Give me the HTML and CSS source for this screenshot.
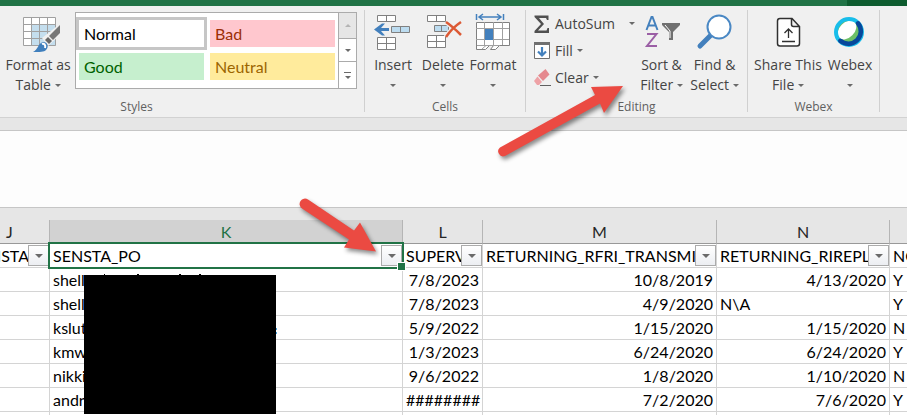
FILE: index.html
```html
<!DOCTYPE html>
<html lang="en">
<head>
<meta charset="utf-8">
<title>Spreadsheet</title>
<link rel="stylesheet" href="styles.css">
</head>
<body>
<header class="titlebar"><div class="account"></div></header>
<nav class="ribbon" aria-label="Ribbon">
  <section class="group styles">
    <div class="tools">
      <button class="tool format-as">
        <svg width="40" height="45" viewBox="0 0 40 45"><path d="M5.500 7.500h32v28h-32z" fill="#fff"/><path d="M14 14h24v22H14z" fill="#c4deee"/><path d="M5.500 7.500h32v28h-32zM5.500 14.500h32M5.500 21.500h32M5.500 28.500h32M13.500 7v28M21.500 7v28M29.500 7v28" fill="none" stroke="#a0a0a0"/><path d="M43 13L24 28l6 8 13-12z" fill="#f0f0f0"/><path d="M42 15v8l-7 7-4-4z" fill="#777"/><path d="M30 27l4 4-3 3-4-4z" fill="#666"/><path d="M15 42c5-2 5-9 10-10 5 0 6 5 3 8-2 2-6 2-13 2z" fill="#3f7fbd"/><path d="M24 34c2-1 4 1 3 4" stroke="#fff" stroke-width="2" fill="none"/></svg>
        <span>Format as</span><span>Table <i class="caret"></i></span>
      </button>
      <div class="gallery">
        <div class="swatches">
          <button class="swatch normal">Normal</button><button class="swatch bad">Bad</button>
          <button class="swatch good">Good</button><button class="swatch neutral">Neutral</button>
        </div>
        <div class="scroller">
          <button class="up" aria-label="Previous styles" disabled><i class="caret"></i></button>
          <button aria-label="Next styles"><i class="caret"></i></button>
          <button class="more" aria-label="More styles"><i class="caret"></i></button>
        </div>
      </div>
    </div>
    <h2>Styles</h2>
  </section>
  <span class="separator"></span>
  <section class="group cells">
    <div class="tools">
      <button class="tool">
        <svg width="40" height="45" viewBox="0 0 40 45"><g fill="#fff" stroke="#808080"><path d="M4.500 5.500h18v6h-18zM13.500 5v6"/><path d="M4.500 27.500h18v12h-18zM4.500 33.500h18M13.500 27v12"/><path d="M18.500 16.500h18v6h-18zM27.500 16v6" fill="#bcdcf0"/></g><path d="M1 19.500l8-6h3l-4 4.500h8v3H8l4 4.500H9z" fill="#4380bd"/></svg>
        <span>Insert</span><span><i class="caret"></i></span>
      </button>
      <button class="tool">
        <svg width="40" height="45" viewBox="0 0 40 45"><g fill="#fff" stroke="#808080"><path d="M4.500 5.500h18v6h-18zM13.500 5v6"/><path d="M4.500 25.500h18v12h-18zM4.500 31.500h18M13.500 25v12"/><path d="M11.500 15.500h14v6h-14zM18.500 15v6" fill="#bcdcf0"/></g><path d="M23 12c6 4 10 8 15 13M38 12c-6 4-11 9-15 15" stroke="#f0f0f0" stroke-width="5" fill="none"/><path d="M23 12c6 4 10 8 15 13M38 12c-6 4-11 9-15 15" stroke="#dc5934" stroke-width="2.500" fill="none"/></svg>
        <span>Delete</span><span><i class="caret"></i></span>
      </button>
      <button class="tool">
        <svg width="40" height="45" viewBox="0 0 40 45"><path d="M3.500 4v6M30.500 4v6M6 7h22M10 4L6 7l4 3M24 4l4 3-4 3" fill="none" stroke="#4380bd" stroke-width="1.500"/><path d="M3.500 12.500h33v23h-10l-4 4h-5l3-4h-4l-4 4h-9z" fill="#fff" stroke="#808080"/><path d="M3 18.500h33M3 29.500h33M11.500 12v23M20.500 12v23M29.500 12v23M4 35.500h22M9 39l4-3.500" fill="none" stroke="#a0a0a0"/><path d="M12 19h8v11h-8z" fill="#4380bd"/></svg>
        <span>Format</span><span><i class="caret"></i></span>
      </button>
    </div>
    <h2>Cells</h2>
  </section>
  <span class="separator"></span>
  <section class="group editing">
    <div class="tools">
      <div class="stack">
        <button class="line autosum"><svg width="18" height="20" viewBox="0 0 18 20"><path d="M1.500 1.500h14v4.500h-1.500l-1-2H6l5 6-6 6.500h8.500l1-2.500h1.500v5h-14.500v-2l6.500-7-6.500-7z" fill="#505050"/></svg><span>AutoSum</span><i class="caret"></i></button>
        <button class="line"><svg width="18" height="20" viewBox="0 0 18 20"><path d="M1.500 1.500h15v16h-15z" fill="#fff" stroke="#707070"/><path d="M1 1h16v3H1z" fill="#707070"/><path d="M9 6v8M5 10.500L9 14.500l4-4" fill="none" stroke="#4380bd" stroke-width="2.200"/></svg><span>Fill</span><i class="caret"></i></button>
        <button class="line"><svg width="18" height="20" viewBox="0 0 18 20"><path d="M5 7.500L12.500 1l4 5.500L10 13z" fill="#e5898f"/><path d="M4.500 8.500l4.500 5.500-3 3H4l-3-4z" fill="#eea2a6"/><path d="M7 17.500h11" stroke="#606060"/></svg><span>Clear</span><i class="caret"></i></button>
      </div>
      <button class="tool">
        <svg width="40" height="45" viewBox="0 0 40 45"><g fill="none" stroke-width="2"><path d="M4.500 20L9.500 7h1l5 13M6 15.500h8" stroke="#4380bd"/><path d="M5 24h9.500L5 36h10" stroke="#9b5fa5"/></g><path d="M20 13h18v2l-7 7v8h-4v-8l-7-7z" fill="#707070"/><path d="M23 15l5 6v7" fill="none" stroke="#fff"/></svg>
        <span>Sort &amp;</span><span>Filter <i class="caret"></i></span>
      </button>
      <button class="tool">
        <svg width="40" height="45" viewBox="0 0 40 45"><path d="M5 36l11-11" stroke="#4380bd" stroke-width="5" stroke-linecap="round"/><circle cx="24" cy="17" r="11.500" fill="#fff" stroke="#4a88c4" stroke-width="2"/></svg>
        <span>Find &amp;</span><span>Select <i class="caret"></i></span>
      </button>
    </div>
    <h2>Editing</h2>
  </section>
  <span class="separator"></span>
  <section class="group webex">
    <div class="tools">
      <button class="tool share">
        <svg width="40" height="45" viewBox="0 0 40 45"><path d="M12 8.500h12l7.500 8v17a2.500 2.500 0 0 1-2.500 2.500H12a2.500 2.500 0 0 1-2.500-2.500V11A2.500 2.500 0 0 1 12 8.500zM23.500 9v5.500a2 2 0 0 0 2 2H31" fill="#fff" stroke="#303030" stroke-width="1.500"/><path d="M20.500 28v-9M16.500 23l4-4 4 4M14 31.500h13" fill="none" stroke="#303030" stroke-width="1.300"/></svg>
        <span>Share This</span><span>File <i class="caret"></i></span>
      </button>
      <button class="tool">
        <svg width="40" height="45" viewBox="0 0 40 45"><circle cx="19" cy="22" r="12" fill="#6cc067"/><ellipse cx="17" cy="20" rx="11" ry="7.500" transform="rotate(-45 17 20)" fill="#fff"/><circle cx="19" cy="22" r="13" fill="none" stroke="#18bdea" stroke-width="4"/><path d="M28 13.300a12.500 12.500 0 0 1-17.700 17.500" fill="none" stroke="#07479b" stroke-width="4.500" stroke-linecap="round"/></svg>
        <span>Webex</span><span><i class="caret"></i></span>
      </button>
    </div>
    <h2>Webex</h2>
  </section>
  <span class="separator"></span>
</nav>
<div class="formula-area"></div>
<main class="sheet">
  <table>
    <colgroup><col class="j"><col class="k"><col class="l"><col class="m"><col class="n"><col></colgroup>
    <thead><tr><th>J</th><th class="active">K</th><th>L</th><th>M</th><th>N</th><th></th></tr></thead>
    <tbody>
      <tr class="names">
        <td class="tail"><div>NSTA</div><button class="filter" aria-label="Filter column J"><i class="caret"></i></button></td>
        <td class="selected"><div>SENSTA_PO</div><button class="filter" aria-label="Filter column K"><i class="caret"></i></button></td>
        <td><div>SUPERV</div><button class="filter" aria-label="Filter column L"><i class="caret"></i></button></td>
        <td><div>RETURNING_RFRI_TRANSMI</div><button class="filter" aria-label="Filter column M"><i class="caret"></i></button></td>
        <td><div>RETURNING_RIREPL</div><button class="filter" aria-label="Filter column N"><i class="caret"></i></button></td>
        <td>NO</td>
      </tr>
      <tr><td></td><td class="masked">shell<svg class="mask" width="194" height="141" viewBox="0 0 194 141"><path d="M0 2h192v139H0z"/><path d="M53 1h2v2h-2zM95 1h2v2h-2zM115 1h2v2h-2zM20 1h1v1h-1z"/><path d="M192 55h1v2h-1zM192 59h1v2h-1z" fill="#4ba3dc"/></svg></td><td class="num">7/8/2023</td><td class="num">10/8/2019</td><td class="num">4/13/2020</td><td>Y</td></tr>
      <tr><td></td><td>shell</td><td class="num">7/8/2023</td><td class="num">4/9/2020</td><td>N\A</td><td>Y</td></tr>
      <tr><td></td><td>kslut</td><td class="num">5/9/2022</td><td class="num">1/15/2020</td><td class="num">1/15/2020</td><td>N</td></tr>
      <tr><td></td><td>kmw</td><td class="num">1/3/2023</td><td class="num">6/24/2020</td><td class="num">6/24/2020</td><td>Y</td></tr>
      <tr><td></td><td>nikki</td><td class="num">9/6/2022</td><td class="num">1/8/2020</td><td class="num">1/10/2020</td><td>N</td></tr>
      <tr><td></td><td>andr</td><td class="num">########</td><td class="num">7/2/2020</td><td class="num">7/6/2020</td><td>Y</td></tr>
      <tr><td></td><td></td><td></td><td></td><td></td><td></td></tr>
    </tbody>
  </table>
</main>
<svg class="arrows" width="640" height="270" viewBox="0 0 640 270" aria-hidden="true">
  <path d="M500 147.500L595 95l-4-8 32-1-19 27-4-9.500L505 156a5 5 0 0 1-5-8.500z"/>
  <path d="M308 199.500l46 31 6-8 16 29-32-4 5-8-47-31a5 5 0 0 1 6-9z"/>
</svg>
</body>
</html>
```

FILE: styles.css
```css
* { box-sizing: border-box; }

body {
  margin: 0;
  display: flex;
  flex-direction: column;
  height: 100vh;
  overflow: hidden;
  position: relative;
  background: #fff;
  color: #444;
  font: 14px/20px "Open Sans", sans-serif;
}

button {
  margin: 0;
  padding: 0;
  border: 0;
  background: none;
  color: inherit;
  font: inherit;
}

svg { display: block; overflow: visible; }

.titlebar {
  display: flex;
  flex: none;
  justify-content: flex-end;
  height: 6px;
  background: #217346;
}
.account { width: 60px; background: #0e5c2f; }

.caret {
  display: inline-block;
  border: 3px solid transparent;
  border-top-color: #6a6a6a;
  border-bottom: 0;
  vertical-align: 3px;
}

/* Ribbon: the first group starts beyond the left edge */
.ribbon {
  display: flex;
  flex: none;
  height: 112px;
  margin-left: -91px;
  padding-top: 4px;
  background: #f0f0f0;
  border-bottom: 1px solid #d2d2d2;
}
.group { flex: none; }
.styles { width: 455px; }
.cells { width: 160px; }
.editing { width: 221px; }
.webex { width: 131px; }
.separator { flex: none; width: 1px; height: 102px; background: #d0d0d0; }
.tools { display: flex; padding-left: 3px; height: 85px; }
.styles .tools { justify-content: flex-end; padding-right: 7px; }
.group h2 {
  margin: 3px 0 0;
  color: #606060;
  font-size: 12px;
  font-weight: 400;
  line-height: 18px;
  text-align: center;
}

.tool {
  display: flex;
  flex-direction: column;
  align-items: center;
  width: 50px;
  white-space: nowrap;
}
.tool span { height: 20px; }
.format-as { width: 66px; margin-right: 4px; }
.editing .tool { width: 53px; }
.webex .share { width: 74px; }

.gallery {
  display: flex;
  width: 282px;
  height: 77px;
  margin-top: 2px;
  background: #fff;
  border: 1px solid #ababab;
}
.swatches {
  display: grid;
  grid-template-columns: 131px 131px;
  grid-auto-rows: 33px;
  flex: 1;
  padding-top: 4px;
}
.swatch {
  padding-left: 5px;
  border: 3px solid transparent;
  background-clip: padding-box;
  font: 16px/20px Lato, sans-serif;
  text-align: left;
}
.normal { border-color: #c6c6c6; color: #000; }
.bad { background-color: #ffc7ce; color: #9c2f06; }
.good { background-color: #c6efce; color: #006100; }
.neutral { background-color: #ffeb9c; color: #9c6500; }

.scroller {
  display: grid;
  grid-template-rows: 26px 23px 26px;
  width: 18px;
  border-left: 1px solid #ababab;
}
.scroller button { display: grid; place-content: center; justify-items: center; border-bottom: 1px solid #ababab; }
.scroller .more { border-bottom: 0; }
.scroller .up { background: #e6e6e6; }
.up .caret { border-top: 0; border-bottom: 3px solid #b4b4b4; }
.more::before { content: ""; width: 7px; height: 1px; margin-bottom: 3px; background: #6a6a6a; }

.stack { display: flex; flex-direction: column; width: 106px; }
.line {
  display: flex;
  align-items: center;
  gap: 4px;
  height: 27px;
  padding-left: 4px;
}
.autosum span { flex: 1; text-align: left; }

.formula-area {
  flex: none;
  height: 90px;
  background: #fdfdfd;
  border-top: 12px solid #e6e6e6;
  border-bottom: 1px solid #c6c6c6;
  box-shadow: inset 0 1px #c6c6c6;
}

/* Grid: column J is partly scrolled out of view */
.sheet { flex: 1; min-height: 0; overflow: hidden; padding-top: 12px; background: #e6e6e6; }
table {
  width: calc(100% + 30px);
  margin-left: -30px;
  table-layout: fixed;
  border-collapse: separate;
  border-spacing: 0;
  background: #fff;
  color: #000;
  font: 16px/20px Lato, sans-serif;
}
.j, .l { width: 80px; }
.k { width: 353px; }
.m { width: 234px; }
.n { width: 173px; }
th {
  height: 24px;
  padding: 0;
  background: #e6e6e6;
  border-right: 1px solid #b5b5b5;
  border-bottom: 1px solid #999;
  color: #262626;
  font-weight: 400;
}
th.active { background: #d2d2d2; color: #217346; }
td {
  position: relative;
  height: 24px;
  padding: 2px 3px 1px;
  border-right: 1px solid #d4d4d4;
  border-bottom: 1px solid #d4d4d4;
  white-space: nowrap;
}
tr > :last-child { border-right: 0; }
td div { overflow: hidden; }
.num { text-align: right; }
.tail { padding-right: 20px; text-align: right; }
.filter {
  position: absolute;
  top: 1px;
  right: 0;
  display: grid;
  place-content: center;
  width: 21px;
  height: 21px;
  background: linear-gradient(#fff, #eceef2);
  border: 1px solid #ababab;
}
.filter .caret { border-width: 4px 4px 0; }
.selected::before {
  content: "";
  position: absolute;
  inset: -2px;
  z-index: 1;
  border: 2px solid #217346;
  pointer-events: none;
}
.selected::after {
  content: "";
  position: absolute;
  right: -4px;
  bottom: -4px;
  z-index: 2;
  width: 7px;
  height: 7px;
  background: #217346;
  border: 1px solid #fff;
}
.mask { position: absolute; left: 34px; top: 5px; z-index: 1; }

.arrows {
  position: absolute;
  top: 0;
  left: 0;
  z-index: 3;
  fill: #eb4a42;
  filter: drop-shadow(2px 3px 2px rgba(0, 0, 0, 0.45));
  pointer-events: none;
}
```
